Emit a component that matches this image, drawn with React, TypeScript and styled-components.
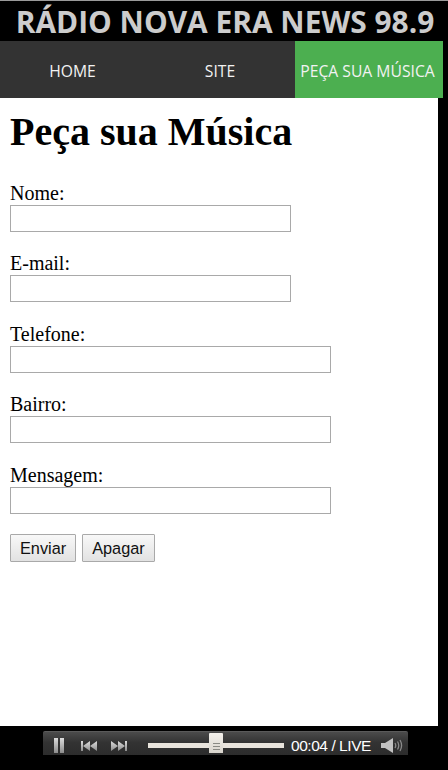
import React from "react";
import styled, { createGlobalStyle } from "styled-components";

const Global = createGlobalStyle`
  html, body { margin: 0; padding: 0; background: #000; overflow: hidden; }
  * { box-sizing: border-box; }
`;
const Page = styled.div`
  width: 448px;
  height: 770px;
  background: #000;
  display: flex;
  flex-direction: column;
  overflow: hidden;
`;
const TopLine = styled.div`
  height: 1px;
  background: #9a9a9a;
`;
const Header = styled.h2`
  margin: 0;
  height: 40px;
  background: #000;
  color: #ccc;
  font: 700 29.9px/42px "Open Sans", sans-serif;
  text-align: center;
  white-space: nowrap;
  padding-left: 2px;
`;
const Nav = styled.nav`
  width: 443px;
  height: 57px;
  background: #333;
  display: grid;
  grid-template-columns: 145px 150px 148px;
`;
const NavItem = styled.a<{ $active?: boolean }>`
  display: flex;
  align-items: center;
  justify-content: center;
  padding-top: 3px;
  padding-right: ${(p) => (p.$active ? 3 : 0)}px;
  background: ${(p) => (p.$active ? "#4caf50" : "transparent")};
  color: #f2f2f2;
  font: 400 15.7px "Open Sans", sans-serif;
  white-space: nowrap;
`;
const Main = styled.main`
  width: 438px;
  height: 628px;
  background: #fff;
  padding: 11px 10px 0;
  color: #000;
  font-family: "Liberation Serif", serif;
`;
const Title = styled.h1`
  margin: 0 0 26.6px;
  font-size: 40px;
  line-height: 46px;
  font-weight: 700;
`;
const Form = styled.form`
  display: flex;
  flex-direction: column;
  gap: 20.5px;
`;
const Field = styled.label`
  display: flex;
  flex-direction: column;
  font-size: 20px;
  line-height: 23px;
`;
const Input = styled.input<{ $wide?: boolean }>`
  width: ${(p) => (p.$wide ? 321 : 281)}px;
  height: 27px;
  border: 1px solid #a9a9a9;
  background: #fff;
  margin: 0;
  padding: 1px 2px;
`;
const Buttons = styled.div`
  display: flex;
  gap: 6px;
`;
const Button = styled.button`
  height: 28px;
  padding: 0 9px;
  border: 1px solid #a9a9a9;
  border-radius: 1px;
  background: linear-gradient(#f8f8f8, #e2e2e2);
  color: #111;
  font: 400 16.3px "Liberation Sans", sans-serif;
`;
const PlayerRow = styled.div`
  margin: 5px 0 0 43px;
  width: 365px;
  height: 24px;
  padding-top: 4px;
  border-radius: 2px 2px 0 0;
  background: linear-gradient(#4b4b4b, #333 45%, #2c2c2c);
  border-top: 1px solid #5a5a5a;
  display: flex;
  align-items: center;
  color: #fff;
`;
const IconSlot = styled.span<{ $w: number; $ml: number }>`
  display: flex;
  width: ${(p) => p.$w}px;
  margin-left: ${(p) => p.$ml}px;
  flex: none;
`;
const Track = styled.div`
  width: 136px;
  height: 5px;
  margin-left: 21px;
  background: #e8e3dc;
  position: relative;
  flex: none;
`;
const Thumb = styled.div`
  position: absolute;
  left: 61px;
  top: -10px;
  width: 14px;
  height: 20px;
  background: linear-gradient(#f4f1ec, #d8d4cc);
  border-radius: 1px 1px 0 0;
  display: flex;
  flex-direction: column;
  align-items: center;
  justify-content: center;
  gap: 2px;
  padding-top: 6px;
`;
const Grip = styled.i`
  width: 7px;
  height: 1px;
  background: #8a8a84;
`;
const Time = styled.span`
  margin-left: 7px;
  width: 81px;
  flex: none;
  font: 400 15.5px "Liberation Sans", sans-serif;
  letter-spacing: -0.45px;
  white-space: nowrap;
`;

const Grad = () => (
  <defs>
    <linearGradient id="ic" x1="0" y1="0" x2="0" y2="1">
      <stop offset="0" stopColor="#dcdcdc" />
      <stop offset="1" stopColor="#8c8c8c" />
    </linearGradient>
  </defs>
);

export default function App() {
  return (
    <Page>
      <Global />
      <TopLine />
      <Header>RÁDIO NOVA ERA NEWS 98.9</Header>
      <Nav>
        <NavItem>HOME</NavItem>
        <NavItem>SITE</NavItem>
        <NavItem $active>PEÇA SUA MÚSICA</NavItem>
      </Nav>
      <Main>
        <Title>Peça sua Música</Title>
        <Form>
          <Field>Nome:<Input /></Field>
          <Field>E-mail:<Input /></Field>
          <Field>Telefone:<Input $wide /></Field>
          <Field>Bairro:<Input $wide /></Field>
          <Field>Mensagem:<Input $wide /></Field>
          <Buttons>
            <Button type="button">Enviar</Button>
            <Button type="button">Apagar</Button>
          </Buttons>
        </Form>
      </Main>
      <PlayerRow>
        <IconSlot $w={12} $ml={10}>
          <svg width="12" height="15" viewBox="0 0 12 15">
            <Grad />
            <path d="M1 0h4v15H1zM7 0h4v15H7z" fill="url(#ic)" />
          </svg>
        </IconSlot>
        <IconSlot $w={16} $ml={16}>
          <svg width="16" height="12" viewBox="0 0 16 12">
            <path d="M0 1h2v10H0zM2 6l7-5v10zM9 6l7-5v10z" fill="url(#ic)" />
          </svg>
        </IconSlot>
        <IconSlot $w={16} $ml={14}>
          <svg width="16" height="12" viewBox="0 0 16 12">
            <path d="M0 1l7 5-7 5zM7 1l7 5-7 5zM14 1h2v10h-2z" fill="url(#ic)" />
          </svg>
        </IconSlot>
        <Track>
          <Thumb><Grip /><Grip /><Grip /></Thumb>
        </Track>
        <Time>00:04 / LIVE</Time>
        <IconSlot $w={22} $ml={9}>
          <svg width="22" height="15" viewBox="0 0 22 15">
            <path d="M0 5h4l8-5v15l-8-5H0z" fill="#c2c2c2" />
            <path d="M14 5q1.5 2.5 0 5M16.5 3.5q2.5 4 0 8M19 2q3.2 5.500 0 11" fill="none" stroke="#8a8a8a" strokeWidth="1.3" />
          </svg>
        </IconSlot>
      </PlayerRow>
    </Page>
  );
}
